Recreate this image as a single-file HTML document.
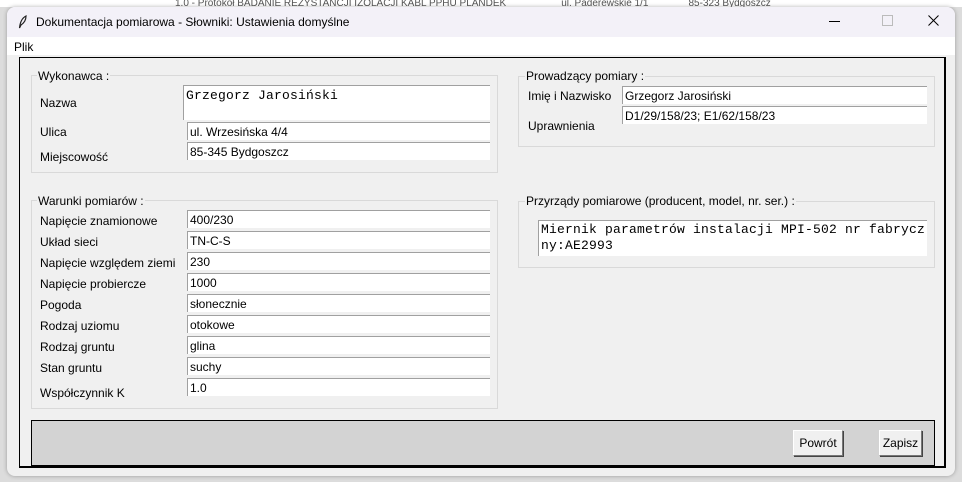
<!DOCTYPE html>
<html><head><meta charset="utf-8"><style>
body{margin:0;width:962px;height:482px;background:#dcdcdc;position:relative;overflow:hidden;font-family:"Liberation Sans",sans-serif;font-size:12px;color:#000}
.a{position:absolute}
.win{left:7px;top:7px;width:948px;height:469px;background:#f0f0f0;border-radius:8px;overflow:hidden;box-shadow:0 0 4px rgba(0,0,0,.3)}
.fs{position:absolute;border:1px solid #d9d9d9}
.lg{position:absolute;background:#f0f0f0;padding:0 1px;font-size:12px;line-height:14px}
.in{position:absolute;background:#fff;border-top:1px solid #a0a0a0;border-left:1px solid #a0a0a0;height:18px;line-height:18px;padding-left:2px;box-sizing:border-box;font-size:12px;white-space:nowrap;overflow:hidden}
.lb{position:absolute;left:40px;font-size:12px;line-height:14px}
.mono{font-family:"Liberation Mono",monospace;font-size:13px;letter-spacing:0.2px}
.btn{position:absolute;background:#f0f0f0;border:1px solid #fff;border-right-color:#777;border-bottom-color:#777;box-shadow:1px 1px 0 #444;font-size:12px;text-align:center;line-height:24px;height:24px}
</style></head><body>
<div class="a" style="left:0;top:0;width:962px;height:7px;background:#fff;font-size:10px;line-height:7px;overflow:hidden;color:#555"><span style="margin-left:175px">1.0 - Protokół BADANIE REZYSTANCJI IZOLACJI KABL PPHU PLANDEK</span><span style="margin-left:55px">ul. Paderewskie 1/1</span><span style="margin-left:40px">85-323 Bydgoszcz</span></div>
<div class="a win">
 <div class="a" style="left:0;top:0;width:948px;height:30px;background:#f3f1f8"></div>
 <svg class="a" style="left:11px;top:8px" width="10" height="14" viewBox="0 0 10 14"><path d="M8 1 C4 3 2 8 1.5 13 L3 10 C6 8 8 5 8 1Z" fill="none" stroke="#222" stroke-width="1.2"/></svg>
 <div class="a" style="left:29px;top:8px;font-size:12px">Dokumentacja pomiarowa - Słowniki: Ustawienia domyślne</div>
 <div class="a" style="left:822px;top:14px;width:11px;height:1px;background:#000"></div>
 <div class="a" style="left:875px;top:8px;width:9px;height:9px;border:1px solid #bbb"></div>
 <svg class="a" style="left:921px;top:8px" width="11" height="11"><path d="M0.5 0.5L10.5 10.5M10.5 0.5L0.5 10.5" stroke="#000" stroke-width="1"/></svg>
 <div class="a" style="left:0;top:30px;width:948px;height:18px;background:#fff"></div>
 <div class="a" style="left:7px;top:33px">Plik</div>
 <div class="a" style="left:12px;top:50px;width:924px;height:408px;border:1px solid #000;border-bottom:2px solid #000;border-right:2px solid #000"></div>
</div>
<!-- Wykonawca -->
<div class="fs" style="left:31px;top:75px;width:465px;height:96px"></div>
<div class="lg" style="left:37px;top:69px">Wykonawca :</div>
<div class="lb" style="top:96px">Nazwa</div>
<div class="in mono" style="left:183px;top:85px;width:307px;height:35px;line-height:20px">Grzegorz Jarosiński</div>
<div class="lb" style="top:125px">Ulica</div>
<div class="in" style="left:187px;top:122px;width:303px">ul. Wrzesińska 4/4</div>
<div class="lb" style="top:150px">Miejscowość</div>
<div class="in" style="left:187px;top:142px;width:303px">85-345 Bydgoszcz</div>
<!-- Prowadzacy -->
<div class="fs" style="left:518px;top:76px;width:415px;height:69px"></div>
<div class="lg" style="left:525px;top:69px">Prowadzący pomiary :</div>
<div class="lb" style="left:528px;top:89px">Imię i Nazwisko</div>
<div class="in" style="left:622px;top:86px;width:305px">Grzegorz Jarosiński</div>
<div class="lb" style="left:528px;top:119px">Uprawnienia</div>
<div class="in" style="left:622px;top:106px;width:305px">D1/29/158/23; E1/62/158/23</div>
<!-- Przyrzady -->
<div class="fs" style="left:518px;top:201px;width:415px;height:65px"></div>
<div class="lg" style="left:525px;top:194px">Przyrządy pomiarowe (producent, model, nr. ser.) :</div>
<div class="in mono" style="left:538px;top:220px;width:389px;height:36px;line-height:16px;padding-top:1px;white-space:normal;word-break:break-all">Miernik parametrów instalacji MPI-502 nr fabryczny:AE2993</div>
<!-- Warunki -->
<div class="fs" style="left:31px;top:200px;width:465px;height:207px"></div>
<div class="lg" style="left:37px;top:194px">Warunki pomiarów :</div>
<div class="lb" style="top:214px">Napięcie znamionowe</div><div class="in" style="left:187px;top:210px;width:303px">400/230</div>
<div class="lb" style="top:235px">Układ sieci</div><div class="in" style="left:187px;top:231px;width:303px">TN-C-S</div>
<div class="lb" style="top:256px">Napięcie względem ziemi</div><div class="in" style="left:187px;top:252px;width:303px">230</div>
<div class="lb" style="top:277px">Napięcie probiercze</div><div class="in" style="left:187px;top:273px;width:303px">1000</div>
<div class="lb" style="top:298px">Pogoda</div><div class="in" style="left:187px;top:294px;width:303px">słonecznie</div>
<div class="lb" style="top:319px">Rodzaj uziomu</div><div class="in" style="left:187px;top:315px;width:303px">otokowe</div>
<div class="lb" style="top:340px">Rodzaj gruntu</div><div class="in" style="left:187px;top:336px;width:303px">glina</div>
<div class="lb" style="top:361px">Stan gruntu</div><div class="in" style="left:187px;top:357px;width:303px">suchy</div>
<div class="lb" style="top:386px">Współczynnik K</div><div class="in" style="left:187px;top:378px;width:303px">1.0</div>
<!-- bottom panel -->
<div class="a" style="left:31px;top:420px;width:902px;height:44px;background:#d3d3d3;border:1px solid #000;border-bottom:2px solid #000"></div>
<div class="btn" style="left:793px;top:430px;width:48px">Powrót</div>
<div class="btn" style="left:879px;top:430px;width:41px">Zapisz</div>
</body></html>
